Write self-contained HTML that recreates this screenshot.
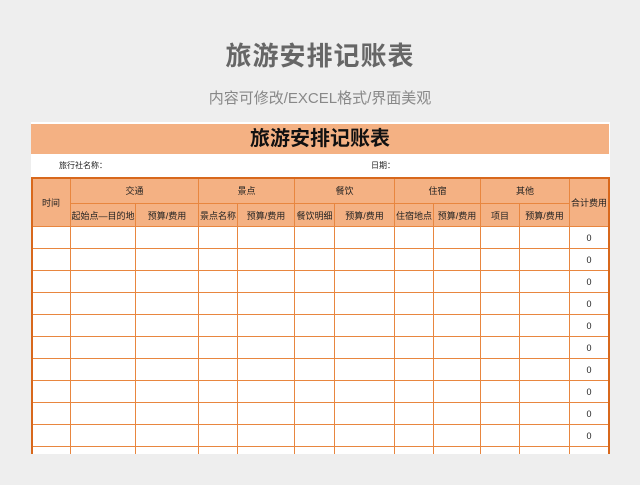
<!DOCTYPE html>
<html><head><meta charset="utf-8"><style>
body{margin:0;width:640px;height:485px;background:#eeeeee;font-family:"Liberation Sans","Noto Sans CJK SC",sans-serif;overflow:hidden;position:relative}
.t1{position:absolute;top:36px;left:0;width:640px;text-align:center;font-size:26px;color:#666;font-weight:bold;letter-spacing:1px}
.t2{position:absolute;top:87px;left:0;width:640px;text-align:center;font-size:15px;color:#888}
.sheet{position:absolute;left:31px;top:122px;width:579px;height:332px;background:#fff;overflow:hidden}
.bar{position:absolute;left:0;top:2px;width:578px;height:30px;background:#f4b183;text-align:center;font-size:20px;font-weight:bold;line-height:31px;color:#111}
.info{position:absolute;top:38px;font-size:8px;color:#222}
table{position:absolute;left:0;top:55px;border-collapse:collapse;table-layout:fixed;font-size:9px;color:#222}
td{border:1px solid #e8863f;text-align:center;padding:0;height:21px;white-space:nowrap;overflow:hidden}
.h td{background:#f4b183;}
.wrap{position:absolute;left:0;top:55px;width:575px;height:290px;border:2px solid #d8681c;border-bottom:none;pointer-events:none}
</style></head><body>
<div class="t1">旅游安排记账表</div>
<div class="t2">内容可修改/EXCEL格式/界面美观</div>
<div class="sheet">
<div class="bar">旅游安排记账表</div>
<div class="info" style="left:28px">旅行社名称：</div>
<div class="info" style="left:340px">日期：</div>
<table>
<colgroup><col style="width:39px"><col style="width:65px"><col style="width:63px"><col style="width:39px"><col style="width:57px"><col style="width:40px"><col style="width:60px"><col style="width:39px"><col style="width:47px"><col style="width:39px"><col style="width:50px"><col style="width:39px"></colgroup>
<tr class="h" style="height:26px"><td rowspan="2">时间</td><td colspan="2">交通</td><td colspan="2">景点</td><td colspan="2">餐饮</td><td colspan="2">住宿</td><td colspan="2">其他</td><td rowspan="2">合计费用</td></tr>
<tr class="h" style="height:23px"><td>起始点—目的地</td><td>预算/费用</td><td>景点名称</td><td>预算/费用</td><td>餐饮明细</td><td>预算/费用</td><td>住宿地点</td><td>预算/费用</td><td>项目</td><td>预算/费用</td></tr>
<tr><td></td><td></td><td></td><td></td><td></td><td></td><td></td><td></td><td></td><td></td><td></td><td>0</td></tr>
<tr><td></td><td></td><td></td><td></td><td></td><td></td><td></td><td></td><td></td><td></td><td></td><td>0</td></tr>
<tr><td></td><td></td><td></td><td></td><td></td><td></td><td></td><td></td><td></td><td></td><td></td><td>0</td></tr>
<tr><td></td><td></td><td></td><td></td><td></td><td></td><td></td><td></td><td></td><td></td><td></td><td>0</td></tr>
<tr><td></td><td></td><td></td><td></td><td></td><td></td><td></td><td></td><td></td><td></td><td></td><td>0</td></tr>
<tr><td></td><td></td><td></td><td></td><td></td><td></td><td></td><td></td><td></td><td></td><td></td><td>0</td></tr>
<tr><td></td><td></td><td></td><td></td><td></td><td></td><td></td><td></td><td></td><td></td><td></td><td>0</td></tr>
<tr><td></td><td></td><td></td><td></td><td></td><td></td><td></td><td></td><td></td><td></td><td></td><td>0</td></tr>
<tr><td></td><td></td><td></td><td></td><td></td><td></td><td></td><td></td><td></td><td></td><td></td><td>0</td></tr>
<tr><td></td><td></td><td></td><td></td><td></td><td></td><td></td><td></td><td></td><td></td><td></td><td>0</td></tr>
<tr><td></td><td></td><td></td><td></td><td></td><td></td><td></td><td></td><td></td><td></td><td></td><td>0</td></tr>
</table>
<div class="wrap"></div>
</div>
</body></html>
